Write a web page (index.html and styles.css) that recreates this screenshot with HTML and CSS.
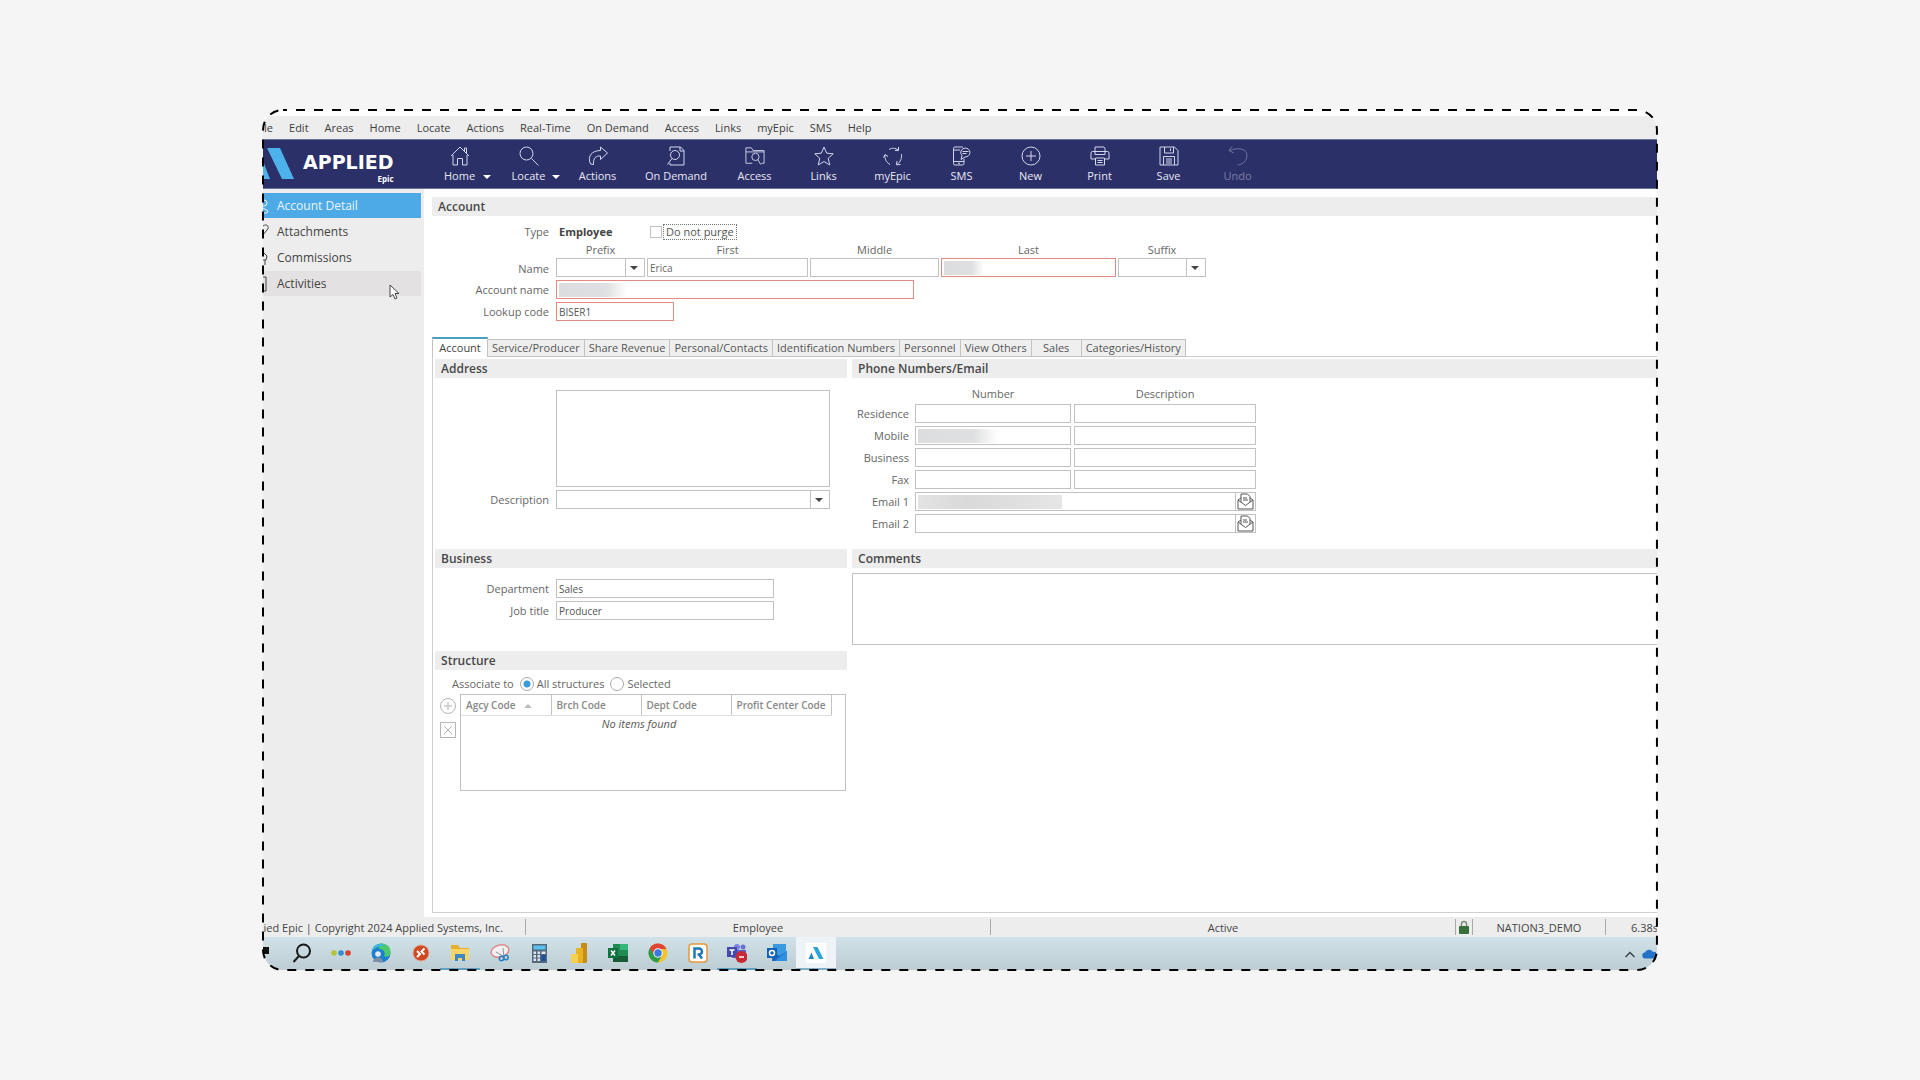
FILE: index.html
```html
<!DOCTYPE html>
<html lang="en">
<head>
    <meta charset="UTF-8">
    <meta name="viewport" content="width=device-width, initial-scale=1.0">
    <title>Applied Epic - Account Detail</title>
    <link rel="stylesheet" href="styles.css">
</head>
<body>
    <div class="stage">
        <div class="window">
            <nav class="menubar">
                <a href="#" class="cut">File</a>
                <a href="#">Edit</a>
                <a href="#">Areas</a>
                <a href="#">Home</a>
                <a href="#">Locate</a>
                <a href="#">Actions</a>
                <a href="#">Real-Time</a>
                <a href="#">On Demand</a>
                <a href="#">Access</a>
                <a href="#">Links</a>
                <a href="#">myEpic</a>
                <a href="#">SMS</a>
                <a href="#">Help</a>
            </nav>

            <header class="toolbar">
                <div class="brand">
                    <svg class="brand-mark" viewBox="0 0 32 34" fill="#4db2ec">
                        <path d="M4 1h13l14 31H19z"/>
                        <path d="M0 14l7 18H0z"/>
                    </svg>
                    <div class="brand-text">
                        <strong>APPLIED</strong>
                        <small>Epic</small>
                    </div>
                </div>
                <button class="tool has-menu">
                    <svg viewBox="0 0 20 20"><path d="M1 10L10 1l9 9M3 9v10h4.500v-6.500h5V19H17V9M14.500 5V2h2v5"/></svg>
                    Home
                </button>
                <button class="tool has-menu">
                    <svg viewBox="0 0 20 20"><circle cx="7.500" cy="7.500" r="6.500"/><path d="M12.500 12.500L19.500 19.500"/></svg>
                    Locate
                </button>
                <button class="tool">
                    <svg viewBox="0 0 20 20"><path d="M12.500 1L19.500 7l-7 6.500V10C8 9.500 5 12 5.500 18.500L2.500 18C-1 10 4 4.500 12.500 4.500z"/></svg>
                    Actions
                </button>
                <button class="tool tool-wide">
                    <svg viewBox="0 0 20 20"><path d="M4 5V1h10.500L18 4.500V19H4v-2"/><path d="M14 1v4h4"/><circle cx="9" cy="9" r="4.500"/><path d="M6 12.500L1.500 18.500"/></svg>
                    On Demand
                </button>
                <button class="tool">
                    <svg viewBox="0 0 22 20"><path d="M8 18H1V1h6l2 3h12v14h-3M1 5.500h20"/><circle cx="11.500" cy="11" r="4"/><path d="M14 14l3.500 5.500"/></svg>
                    Access
                </button>
                <button class="tool">
                    <svg viewBox="0 0 20 20"><path d="M10 1l2.700 6.200 6.500.6-5 4.500 1.600 6.700L10 15.500 4.200 19l1.600-6.700-5-4.500 6.500-.6z"/></svg>
                    Links
                </button>
                <button class="tool">
                    <svg viewBox="0 0 20 20"><path d="M6 3.500C9 1.500 12.500 2 15 4M15.500 1v3.500H12M2 9c-.5 4 1.500 7.500 5 9.500M.5 11.500L2 8.500l3 2M18.500 8c.5 4-1 8-4.500 10.500M17.500 18.500l-4 .3.500-3.800"/></svg>
                    myEpic
                </button>
                <button class="tool">
                    <svg viewBox="0 0 20 20"><path d="M11 1H3a1.500 1.500 0 0 0-1.500 1.500v15A1.500 1.500 0 0 0 3 19h7.500a1.500 1.500 0 0 0 1.500-1.500V13M1.500 4H8M1.500 15.500H12M6 17.300h2"/><path d="M13 2a5 4.500 0 1 1 0 9l-4 2.500 1-4A5 4.500 0 0 1 13 2zM10.500 5.500h6M10.500 7.500h4"/></svg>
                    SMS
                </button>
                <button class="tool">
                    <svg viewBox="0 0 20 20"><circle cx="10" cy="10" r="9"/><path d="M10 5v10M5 10h10"/></svg>
                    New
                </button>
                <button class="tool">
                    <svg viewBox="0 0 20 20"><path d="M5 5.500V1h9l1 1.500v3M5 13H1V7a1.500 1.500 0 0 1 1.500-1.500h15A1.500 1.500 0 0 1 19 7v6h-4M5 5.500h10v3H5zM5.500 12h9v7h-9zM7.500 14.500h5M7.500 16.500h5"/></svg>
                    Print
                </button>
                <button class="tool">
                    <svg viewBox="0 0 20 20"><path d="M1 1h14.500L19 4.500V19H1zM5.500 1v6h9V1M11.500 2.500V5M4.500 19v-8.500h11V19M7 13h6M7 15h6M7 17h6"/></svg>
                    Save
                </button>
                <button class="tool" disabled>
                    <svg viewBox="0 0 20 20"><path d="M4 .5L1 4.500l5 2.500M1.500 4.500C9 1.500 19 2 19 9.500c0 5-4 9-9.500 9.500"/></svg>
                    Undo
                </button>
            </header>

            <div class="body">
                <nav class="sidebar">
                    <a href="#" class="side-item active">
                        <svg viewBox="0 0 10 16"><circle cx="1" cy="5" r="3"/><path d="M0 10l5 3-1 2H0"/></svg>
                        Account Detail
                    </a>
                    <a href="#" class="side-item">
                        <svg viewBox="0 0 10 16"><path d="M0 2c4-3 7 1 4 4l-4 5"/></svg>
                        Attachments
                    </a>
                    <a href="#" class="side-item">
                        <svg viewBox="0 0 10 16"><path d="M0 2l4 4-1 4H0M2 10v5"/></svg>
                        Commissions
                    </a>
                    <a href="#" class="side-item hover">
                        <svg viewBox="0 0 10 16"><path d="M0 1h3v14H0"/></svg>
                        Activities
                    </a>
                    <svg class="cursor" viewBox="0 0 11 16"><path d="M1 1v12l3-2.500 2 4.500 2-1-2-4.500h4z" fill="#fff" stroke="#444"/></svg>
                </nav>

                <main class="main">
                    <h2 class="bar">Account</h2>
                    <form class="account-form">
                        <div class="row">
                            <span class="label">Type</span>
                            <strong class="type">Employee</strong>
                            <label class="purge"><input type="checkbox"><span>Do not purge</span></label>
                        </div>
                        <div class="row name-row">
                            <span class="label">Name</span>
                            <div class="name-grid">
                                <label for="prefix">Prefix</label>
                                <label for="first">First</label>
                                <label for="middle">Middle</label>
                                <label for="last">Last</label>
                                <label for="suffix">Suffix</label>
                                <div class="combo"><select id="prefix"><option></option></select></div>
                                <input type="text" id="first" value="Erica">
                                <input type="text" id="middle">
                                <input type="text" id="last" class="required masked mask-short">
                                <div class="combo"><select id="suffix"><option></option></select></div>
                            </div>
                        </div>
                        <div class="row">
                            <label class="label" for="account-name">Account name</label>
                            <input type="text" id="account-name" class="required masked mask-medium">
                        </div>
                        <div class="row">
                            <label class="label" for="lookup">Lookup code</label>
                            <input type="text" id="lookup" class="required" value="BISER1">
                        </div>
                    </form>

                    <div class="tabs">
                        <button class="tab active">Account</button>
                        <button class="tab">Service/Producer</button>
                        <button class="tab">Share Revenue</button>
                        <button class="tab">Personal/Contacts</button>
                        <button class="tab">Identification Numbers</button>
                        <button class="tab">Personnel</button>
                        <button class="tab">View Others</button>
                        <button class="tab tab-short">Sales</button>
                        <button class="tab">Categories/History</button>
                    </div>

                    <div class="panel">
                        <div class="col">
                            <section class="address">
                                <h2 class="bar">Address</h2>
                                <textarea aria-label="Address"></textarea>
                                <div class="row">
                                    <label class="label" for="address-desc">Description</label>
                                    <div class="combo"><select id="address-desc"><option></option></select></div>
                                </div>
                            </section>
                            <section class="business">
                                <h2 class="bar">Business</h2>
                                <div class="row">
                                    <label class="label" for="department">Department</label>
                                    <input type="text" id="department" value="Sales">
                                </div>
                                <div class="row">
                                    <label class="label" for="job">Job title</label>
                                    <input type="text" id="job" value="Producer">
                                </div>
                            </section>
                            <section class="structure">
                                <h2 class="bar">Structure</h2>
                                <div class="radios">
                                    <span>Associate to</span>
                                    <label><input type="radio" name="structure" checked>All structures</label>
                                    <label><input type="radio" name="structure">Selected</label>
                                </div>
                                <div class="list">
                                    <div class="list-actions">
                                        <button aria-label="Add"><svg viewBox="0 0 16 16"><circle cx="8" cy="8" r="7.500"/><path d="M8 4v8M4 8h8"/></svg></button>
                                        <button aria-label="Remove"><svg viewBox="0 0 16 16"><path d="M.5.500h15v15H.5zM4 4l8 8M12 4l-8 8"/></svg></button>
                                    </div>
                                    <div class="list-box">
                                        <table>
                                            <thead>
                                                <tr><th>Agcy Code <i class="sort"></i></th><th>Brch Code</th><th>Dept Code</th><th>Profit Center Code</th></tr>
                                            </thead>
                                            <tbody>
                                                <tr><td colspan="4">No items found</td></tr>
                                            </tbody>
                                        </table>
                                    </div>
                                </div>
                            </section>
                        </div>

                        <div class="col">
                            <section class="phones">
                                <h2 class="bar">Phone Numbers/Email</h2>
                                <div class="phone-grid">
                                    <span></span><span class="head">Number</span><span class="head">Description</span>
                                    <label class="label" for="residence">Residence</label>
                                    <input type="text" id="residence"><input type="text" aria-label="Residence description">
                                    <label class="label" for="mobile">Mobile</label>
                                    <input type="text" id="mobile" class="masked mask-phone"><input type="text" aria-label="Mobile description">
                                    <label class="label" for="business">Business</label>
                                    <input type="text" id="business"><input type="text" aria-label="Business description">
                                    <label class="label" for="fax">Fax</label>
                                    <input type="text" id="fax"><input type="text" aria-label="Fax description">
                                    <label class="label" for="email1">Email 1</label>
                                    <div class="email">
                                        <input type="text" id="email1" class="masked mask-email">
                                        <button type="button" aria-label="Send to email 1"><svg viewBox="0 0 17 17"><path d="M1 7v9h15V7M1 7l7.500 5.500L16 7M1 7l3-2M16 7l-3-2M4 9V1h6.500L13 3.500V9M6 5h4M6 7h5"/></svg></button>
                                    </div>
                                    <label class="label" for="email2">Email 2</label>
                                    <div class="email">
                                        <input type="text" id="email2">
                                        <button type="button" aria-label="Send to email 2"><svg viewBox="0 0 17 17"><path d="M1 7v9h15V7M1 7l7.500 5.500L16 7M1 7l3-2M16 7l-3-2M4 9V1h6.500L13 3.500V9M6 5h4M6 7h5"/></svg></button>
                                    </div>
                                </div>
                            </section>
                            <section class="comments">
                                <h2 class="bar">Comments</h2>
                                <textarea aria-label="Comments"></textarea>
                            </section>
                        </div>
                    </div>
                </main>
            </div>

            <footer class="statusbar">
                <div class="copyright"><span>Applied Epic | Copyright 2024 Applied Systems, Inc.</span></div>
                <div class="cell">Employee</div>
                <div class="cell">Active</div>
                <div class="lock">
                    <svg viewBox="0 0 10 14"><path d="M2.500 7V4a2.500 2.500 0 0 1 5 0v3" fill="none" stroke="#7b8f7b" stroke-width="1.500"/><rect y="6" width="10" height="8" rx="1" fill="#38703a"/></svg>
                </div>
                <div class="database">NATION3_DEMO</div>
                <div class="timing">6.38s</div>
            </footer>

            <div class="taskbar">
                <div class="start"></div>
                <div class="apps">
                    <button aria-label="Search"><svg viewBox="0 0 20 20" fill="none" stroke="#1b1b1b" stroke-width="2"><circle cx="11.500" cy="8" r="6.500"/><path d="M7 13l-5.500 6"/></svg></button>
                    <button aria-label="Dots"><svg viewBox="0 0 20 20"><circle cx="3" cy="10" r="2.800" fill="#b5c334"/><circle cx="10" cy="10" r="2.800" fill="#2f8fd6"/><circle cx="17" cy="10" r="2.800" fill="#d8412f"/></svg></button>
                    <button aria-label="Edge"><svg viewBox="0 0 20 20"><circle cx="10" cy="10" r="9.500" fill="#1c7fd0"/><path d="M8 1C15-1 20 4 19.500 10c-.5 4-5 4.500-6.500 3 2-3 0-7-5-7z" fill="#4cc96b"/><path d="M1 8C2 1 10-1 15 3c-5-1-10 1-14 5z" fill="#3cb8dc"/><circle cx="7" cy="11" r="2.800" fill="#e3e9ee"/><path d="M2 19c0-6 10-6 10 0z" fill="#7d8fa3"/></svg></button>
                    <button aria-label="Remote"><svg viewBox="0 0 20 20"><circle cx="10" cy="10" r="8" fill="#cf4a22" stroke="#e2a793"/><path d="M6 8l3 3-3 3M13.500 5.500l-3 3 3 3" fill="none" stroke="#fff" stroke-width="2"/></svg></button>
                    <button class="open" aria-label="Files"><svg viewBox="0 0 20 20"><path d="M1 2h7l2 3h9v12H1z" fill="#e8b02f"/><path d="M1 6h18v11H1z" fill="#f8d568"/><path d="M5 18v-7h10v7h-3v-3H8v3z" fill="#3d87c6"/></svg></button>
                    <button aria-label="Snip"><svg viewBox="0 0 20 20" fill="none"><ellipse cx="10" cy="8" rx="9" ry="6" fill="#f5eeee" stroke="#d98c8c" stroke-width="1.500" transform="rotate(-15 10 8)"/><path d="M6 9l7 4M13 5l1 9" stroke="#8b97a3"/><circle cx="11.500" cy="15.500" r="2.200" stroke="#2f7fc0" stroke-width="1.500"/><circle cx="16" cy="14.500" r="2.200" stroke="#2f7fc0" stroke-width="1.500"/></svg></button>
                    <button aria-label="Calculator"><svg viewBox="0 0 20 20"><rect x="3" y="1" width="15" height="19" fill="#55697c"/><path d="M4.500 2.500h12v4h-12z" fill="#59c3ee"/><path d="M4.500 8.500h2.500v2.500H4.500zM8.500 8.500H11v2.500H8.500zM4.500 12h2.500v2.500H4.500zM8.500 12H11v2.500H8.500zM4.500 15.500h2.500V18H4.500zM8.500 15.500H11V18H8.500zM12.500 8.500h4v2.500h-4z" fill="#dfe6ec"/><path d="M12.500 12h4v6h-4z" fill="#17529a"/></svg></button>
                    <button aria-label="Power BI"><svg viewBox="0 0 20 20"><rect x="12" width="6" height="20" rx="1" fill="#c98d13"/><rect x="7" y="5" width="7" height="15" rx="1" fill="#e6b325"/><rect x="2" y="11" width="7" height="9" rx="1" fill="#f6d150"/></svg></button>
                    <button aria-label="Excel"><svg viewBox="0 0 20 20"><path d="M5 1h15v18H5z" fill="#1f8a52"/><path d="M12 1h8v6h-8z" fill="#36b679"/><path d="M5 13h15v6H5z" fill="#185c37"/><rect y="5" width="10" height="10" fill="#117440"/><path d="M3 7.500l4 5M7 7.500l-4 5" stroke="#fff" stroke-width="1.500"/></svg></button>
                    <button aria-label="Chrome"><svg viewBox="0 0 20 20"><circle cx="10" cy="10" r="9.500" fill="#f5c32c"/><path d="M10 10L1.800 5.200A9.500 9.500 0 0 0 10 19.500l4-7z" fill="#2e9c4c"/><path d="M1.800 5.200A9.500 9.500 0 0 1 18.500 6H10l-4 6z" fill="#df4532"/><circle cx="10" cy="10" r="4.700" fill="#fff"/><circle cx="10" cy="10" r="3.700" fill="#3878e0"/></svg></button>
                    <button aria-label="R"><svg viewBox="0 0 20 20"><rect x="1" y="1" width="18" height="18" rx="3" fill="#fff" stroke="#e8983a" stroke-width="1.500"/><path d="M6.500 15.500v-10h4.500a3 3 0 0 1 0 6H9.500m1.500 0l3 4" fill="none" stroke="#1d78b5" stroke-width="2.500"/></svg></button>
                    <button class="open" aria-label="Teams"><svg viewBox="0 0 20 20"><circle cx="16" cy="4" r="2.500" fill="#6a70cf"/><circle cx="10" cy="4" r="3" fill="#7b83eb"/><path d="M5 7h14v8H5z" fill="#5b61c4"/><rect y="4" width="10" height="10" fill="#4249a8"/><path d="M2.500 7h5M5 7v5" stroke="#fff" stroke-width="1.500"/><circle cx="14.500" cy="14" r="6" fill="#c72a36"/><path d="M12 14h5" stroke="#fff" stroke-width="1.500"/></svg></button>
                    <button aria-label="Outlook"><svg viewBox="0 0 20 20"><path d="M6 1h13v12H6z" fill="#3a9ae0"/><path d="M5 8l7.500 5L20 8v10H5z" fill="#1b67bd"/><path d="M20 8v10H8z" fill="#2f8fe0"/><rect y="5" width="10" height="10" fill="#0f62b4"/><circle cx="5" cy="10" r="2.500" fill="none" stroke="#fff" stroke-width="1.500"/></svg></button>
                    <button class="current" aria-label="Applied Epic"><svg viewBox="0 0 20 20"><path d="M0 0h20v20H0z" fill="#fff"/><path d="M7 4h4.500l6 12H13z" fill="#2aa5dd"/><path d="M5.500 9.500L8 16H2.500z" fill="#2383c2"/></svg></button>
                </div>
                <div class="tray">
                    <svg viewBox="0 0 12 12" fill="none" stroke="#3b464c" stroke-width="1.500"><path d="M1.500 9L6 4.500 10.500 9"/></svg>
                    <svg viewBox="0 0 14 12"><path d="M3.500 10.500a3 3 0 0 1-.5-6 4.500 4.500 0 0 1 8-.5 3.300 3.300 0 0 1 2 6.500z" fill="#2471c8"/></svg>
                </div>
            </div>
        </div>
        <svg class="outline"><rect width="100%" height="100%" rx="20"/></svg>
    </div>
</body>
</html>
```
FILE: styles.css
```css
* {
    margin: 0;
    padding: 0;
    box-sizing: border-box;
}

body {
    font-family: "Open Sans", "Segoe UI", "Noto Sans", sans-serif;
    font-size: 11px;
    line-height: 16px;
    color: #555;
    background: #f5f5f5;
    min-height: 100vh;
    padding: 110px 13.7vw;
    display: flex;
}

a {
    color: inherit;
    text-decoration: none;
}

button,
input,
select,
textarea {
    font: inherit;
    color: inherit;
}

button {
    background: none;
    border: none;
}

.stage {
    position: relative;
    flex: 1;
    min-width: 0;
    display: flex;
}

/* dashed outline drawn over the window edge */
.outline {
    position: absolute;
    inset: 0;
    width: 100%;
    height: 100%;
    overflow: visible;
    pointer-events: none;
}

.outline rect {
    fill: none;
    stroke: #000;
    stroke-width: 2;
    stroke-dasharray: 9 9;
    stroke-dashoffset: 5;
}

.window {
    flex: 1;
    min-width: 0;
    display: flex;
    flex-direction: column;
    padding-top: 6px;
    background: #fff;
    border-radius: 20px;
    overflow: hidden;
}

/* menu bar */
.menubar {
    display: flex;
    align-items: center;
    gap: 16px;
    height: 23px;
    background: #ededed;
    color: #3d3d3d;
    white-space: nowrap;
}

.menubar .cut {
    width: 10px;
    display: flex;
    justify-content: flex-end;
}

/* toolbar */
.toolbar {
    display: flex;
    height: 50px;
    background: #2c3069;
    border-top: 1px solid #6f739c;
    border-bottom: 1px solid #6f739c;
    color: #e6e7f2;
}

.brand {
    width: 162px;
    display: flex;
    padding-top: 7px;
}

.brand-mark {
    width: 32px;
    height: 34px;
}

.brand-text {
    margin-left: 8px;
    display: flex;
    flex-direction: column;
    color: #fff;
}

.brand-text strong {
    font-family: "DejaVu Sans", sans-serif;
    font-size: 19px;
    line-height: 30px;
}

.brand-text small {
    font-size: 8px;
    font-weight: 700;
    line-height: 4px;
    text-align: right;
}

.tool {
    position: relative;
    width: 69px;
    display: flex;
    flex-direction: column;
    align-items: center;
    padding-top: 6px;
    gap: 2px;
}

.tool-wide {
    width: 88px;
}

.tool svg {
    width: 20px;
    height: 20px;
    fill: none;
    stroke: #d3d5ea;
}

.tool:disabled {
    opacity: 0.4;
}

.has-menu::after {
    content: "";
    position: absolute;
    right: 3px;
    bottom: 9px;
    border: 4px solid transparent;
    border-top-color: #fff;
    border-bottom: 0;
}

/* sidebar */
.body {
    flex: 1;
    display: flex;
}

.sidebar {
    position: relative;
    width: 161px;
    padding: 4px 3px 0 0;
    display: flex;
    flex-direction: column;
    gap: 1px;
    background: #ededed;
    font-size: 12px;
    color: #444;
}

.side-item {
    height: 25px;
    display: flex;
    align-items: center;
    gap: 4px;
}

.side-item svg {
    width: 10px;
    height: 16px;
    fill: none;
    stroke: currentColor;
}

.side-item.active {
    background: #4daae6;
    color: #eaf6ff;
}

.side-item.hover {
    background: #e3e1e1;
}

.cursor {
    position: absolute;
    left: 126px;
    top: 95px;
    width: 11px;
    height: 16px;
}

/* main area */
.main {
    flex: 1;
    min-width: 0;
    display: flex;
    flex-direction: column;
    padding: 8px 0 4px 8px;
}

.bar {
    height: 19px;
    padding-left: 6px;
    background: #ededed;
    font-size: 12px;
    line-height: 19px;
    font-weight: 600;
    color: #484848;
}

input[type="text"],
select,
textarea {
    height: 19px;
    width: 100%;
    min-width: 0;
    padding: 0 2px;
    background: #fff;
    border: 1px solid #c2c2c2;
    border-radius: 0;
    font-size: 10px;
}

textarea {
    display: block;
    resize: none;
}

input[type="text"].required {
    border-color: #e58a7e;
}

/* hidden personal values */
input[type="text"].masked {
    background-repeat: no-repeat;
    background-position: 2px 2px;
    background-image: linear-gradient(90deg, #dcdddf 0, #dfe0e1 70%, #fff 100%);
}

input[type="text"].mask-short {
    background-size: 40px 14px;
}

input[type="text"].mask-medium {
    background-size: 68px 14px;
}

input[type="text"].mask-phone {
    background-size: 80px 14px;
}

input[type="text"].mask-email {
    background-image: linear-gradient(90deg, #e3e3e3, #d9d9d9 35%, #e6e6e6);
    background-size: 144px 14px;
}

.combo {
    position: relative;
    width: 100%;
}

.combo select {
    display: block;
    appearance: none;
}

.combo::before {
    content: "";
    position: absolute;
    right: 19px;
    top: 0;
    bottom: 0;
    border-left: 1px solid #c2c2c2;
}

.combo::after {
    content: "";
    position: absolute;
    right: 7px;
    top: 8px;
    border: 4px solid transparent;
    border-top-color: #444;
    border-bottom: 0;
}

.row {
    display: flex;
    align-items: center;
    gap: 7px;
}

.label {
    flex: none;
    text-align: right;
    color: #666;
}

/* account form */
.account-form {
    padding-top: 8px;
    display: flex;
    flex-direction: column;
    gap: 3px;
}

.account-form .label {
    width: 117px;
}

.account-form .row:first-child {
    height: 15px;
}

.type {
    width: 87px;
    padding-left: 3px;
    color: #444;
}

.purge {
    display: flex;
    align-items: center;
    gap: 1px;
}

.purge input {
    appearance: none;
    width: 12px;
    height: 12px;
    border: 1px solid #c2c2c2;
}

.purge span {
    padding: 0 2px;
    border: 1px dotted #777;
    line-height: 14px;
}

.name-row {
    align-items: flex-end;
}

.name-grid {
    display: grid;
    grid-template-columns: 89px 161px 129px 175px 88px;
    column-gap: 2px;
    text-align: center;
    color: #666;
}

#account-name {
    width: 358px;
}

#lookup {
    width: 118px;
}

/* tabs */
.tabs {
    position: relative;
    z-index: 1;
    display: flex;
    align-items: flex-end;
    height: 20px;
    margin: 16px 0 -1px;
}

.tab {
    height: 18px;
    padding: 0 4px;
    background: #efefef;
    border: 1px solid #c2c2c2;
    border-left: 0;
    white-space: nowrap;
    line-height: 16px;
}

.tab.active {
    width: 56px;
    height: 20px;
    background: #fff;
    border-left: 1px solid #c2c2c2;
    border-top: 2px solid #4a9fc0;
    border-bottom: 0;
    color: #444;
}

.tab-short {
    width: 50px;
}

/* tab panel */
.panel {
    flex: 1;
    display: grid;
    grid-template-columns: 412px 1fr;
    gap: 5px;
    padding: 2px 0 0 2px;
    border: 1px solid #cfcfcf;
    border-right: 0;
}

.address textarea {
    width: 274px;
    height: 97px;
    margin: 12px 0 3px 121px;
}

.col .row .label {
    width: 114px;
}

.address {
    padding-bottom: 40px;
}

.address .combo {
    width: 274px;
}

.business {
    padding-bottom: 31px;
}

.business .bar {
    margin-bottom: 11px;
}

.business .row + .row {
    margin-top: 3px;
}

.business input[type="text"] {
    width: 218px;
}

.radios {
    display: flex;
    gap: 6px;
    padding: 6px 0 0 17px;
    color: #666;
}

.radios label {
    display: flex;
    align-items: center;
    gap: 3px;
}

.radios input {
    appearance: none;
    width: 14px;
    height: 14px;
    border: 1px solid #aaa;
    border-radius: 50%;
}

.radios input:checked {
    background: radial-gradient(circle, #3a9bdc 0 3px, #fff 4px);
}

.list {
    display: flex;
    gap: 4px;
    padding: 2px 1px 0 5px;
}

.list-actions {
    display: flex;
    flex-direction: column;
    gap: 8px;
    padding-top: 4px;
}

.list-actions button,
.list-actions svg {
    display: block;
    width: 16px;
    height: 16px;
}

.list-actions svg {
    fill: none;
    stroke: #b5b5b5;
}

.list-box {
    flex: 1;
    height: 97px;
    border: 1px solid #c2c2c2;
}

.list table {
    width: 370px;
    table-layout: fixed;
    border-collapse: collapse;
}

.list th {
    width: 90px;
    height: 20px;
    padding: 0 5px;
    border-right: 1px solid #c2c2c2;
    border-bottom: 1px solid #dedede;
    font-size: 10px;
    font-weight: 600;
    text-align: left;
    color: #888;
    white-space: nowrap;
}

.list th:last-child {
    width: 100px;
}

.list td {
    padding-right: 14px;
    text-align: center;
    font-style: italic;
}

.sort {
    display: inline-block;
    margin-left: 6px;
    border: 4px solid transparent;
    border-top: 0;
    border-bottom-color: #bbb;
    vertical-align: middle;
}

/* phones and email */
.phone-grid {
    display: grid;
    grid-template-columns: 60px 156px 182px;
    grid-template-rows: 14px;
    align-items: center;
    gap: 3px;
    padding: 9px 0 16px;
}

.phone-grid .label {
    padding-right: 3px;
}

.head {
    text-align: center;
    color: #666;
}

.email {
    grid-column: span 2;
    display: flex;
}

.email button {
    flex: none;
    width: 20px;
    height: 19px;
    border: 1px solid #c2c2c2;
    border-left: 0;
}

.email svg {
    display: block;
    width: 17px;
    height: 17px;
    margin: 0 auto;
    fill: none;
    stroke: #555;
}

.comments textarea {
    height: 72px;
    margin-top: 5px;
    border-right: 0;
}

/* status bar */
.statusbar {
    display: flex;
    align-items: center;
    height: 20px;
    background: #ededed;
    color: #444;
    line-height: 18px;
    white-space: nowrap;
}

.statusbar > div {
    height: 16px;
    display: flex;
    justify-content: center;
    border-right: 1px solid #aaa;
}

.statusbar .copyright {
    width: 263px;
    padding-right: 22px;
    justify-content: flex-end;
}

.cell {
    flex: 1;
}

.lock {
    width: 17px;
    align-items: center;
}

.lock svg {
    width: 10px;
    height: 14px;
}

.database {
    width: 133px;
}

.statusbar .timing {
    width: 51px;
    padding-left: 25px;
    justify-content: flex-start;
    border-right: 0;
}

/* taskbar */
.taskbar {
    display: flex;
    height: 33px;
    background: linear-gradient(#d0e1e7, #bccdd4);
}

.start {
    width: 6px;
    height: 7px;
    margin: 10px 13px 0 0;
    background: #111;
}

.apps {
    width: 554px;
    display: grid;
    grid-template-columns: repeat(14, 1fr);
}

.apps button {
    display: flex;
    align-items: center;
    justify-content: center;
    border-bottom: 2px solid transparent;
}

.apps svg {
    width: 20px;
    height: 20px;
}

.apps .open {
    border-bottom-color: #5f9fc0;
}

.apps .current {
    background: #edf3f6;
    border-bottom-color: #7fb0c8;
}

.tray {
    margin-left: auto;
    padding-right: 1px;
    display: flex;
    align-items: center;
    gap: 5px;
}

.tray svg {
    width: 14px;
    height: 12px;
}
```
